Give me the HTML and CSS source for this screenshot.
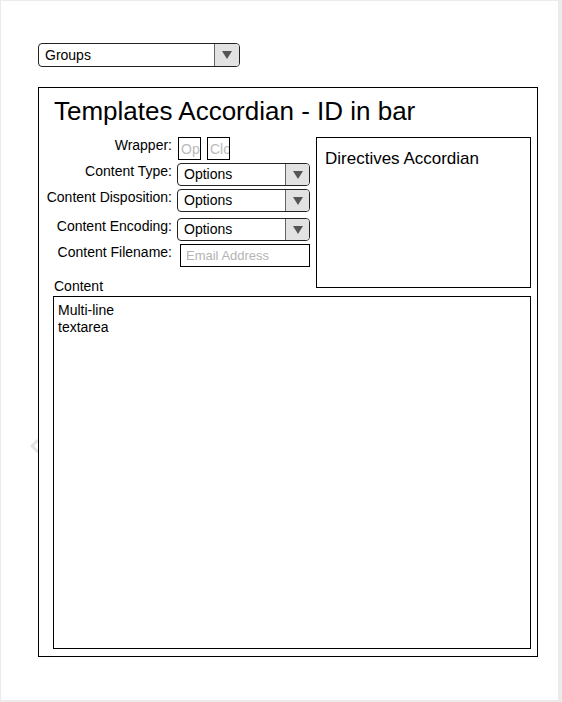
FILE: index.html
```html
<!DOCTYPE html>
<html lang="en">
<head>
  <meta charset="UTF-8">
  <meta name="viewport" content="width=device-width, initial-scale=1.0">
  <title>Templates Accordian</title>
  <link rel="stylesheet" href="styles.css">
</head>
<body>
  <div class="page">
    <svg class="pager" width="10" height="14" viewBox="0 0 10 14">
      <polyline points="8,1 2,7 8,13" fill="none" stroke="#e4e4e4" stroke-width="3"/>
    </svg>

    <div class="select groups">
      <span class="select-text">Groups</span>
      <span class="select-arrow"></span>
    </div>

    <div class="panel">
      <h1>Templates Accordian - ID in bar</h1>

      <div class="top">
        <div class="left">
          <div class="fields">
            <label>Wrapper:</label>
            <div class="wrapper-boxes">
              <span class="mini">Op</span>
              <span class="mini">Clo</span>
            </div>

            <label>Content Type:</label>
            <div class="select">
              <span class="select-text">Options</span>
              <span class="select-arrow"></span>
            </div>

            <label>Content Disposition:</label>
            <div class="select">
              <span class="select-text">Options</span>
              <span class="select-arrow"></span>
            </div>

            <label class="spaced">Content Encoding:</label>
            <div class="select spaced">
              <span class="select-text">Options</span>
              <span class="select-arrow"></span>
            </div>

            <label>Content Filename:</label>
            <div class="text-input">Email Address</div>
          </div>
          <div class="content-label">Content</div>
        </div>

        <div class="directives">Directives Accordian</div>
      </div>

      <div class="textarea">Multi-line<br>textarea</div>
    </div>
  </div>
</body>
</html>
```

FILE: styles.css
```css
body {
  margin: 0;
  background-color: #ebebeb;
  font-family: "Liberation Sans", Arial, sans-serif;
  color: #000;
}
.page {
  position: relative;
  margin: 1px 0 0 1px;
  width: 557px;
  height: 699px;
  box-sizing: border-box;
  padding: 42px 0 0 37px;
  background-color: #fff;
}
.pager {
  position: absolute;
  left: 29px;
  top: 438px;
}
.select {
  display: flex;
  height: 23px;
  box-sizing: border-box;
  border: 1px solid #222;
  border-radius: 4px;
  overflow: hidden;
  background-color: #fff;
}
.select-text {
  flex: 1;
  padding-left: 6px;
  font-size: 14px;
  line-height: 21px;
}
.select-arrow {
  width: 23px;
  border-left: 1px solid #666;
  background-color: #e2e2e2;
  display: flex;
  align-items: center;
  justify-content: center;
}
.select-arrow::after {
  content: "";
  border-left: 5px solid transparent;
  border-right: 5px solid transparent;
  border-top: 8px solid #555;
}
.groups {
  width: 202px;
  height: 24px;
}
.groups .select-text {
  line-height: 22px;
}
.groups .select-arrow {
  width: 24px;
}
.panel {
  position: relative;
  margin-top: 20px;
  width: 500px;
  height: 570px;
  box-sizing: border-box;
  border: 1px solid #000;
}
h1 {
  margin: 8px 0 0 15px;
  font-size: 26px;
  font-weight: normal;
  line-height: 30px;
}
.top {
  display: flex;
  margin-top: 11px;
}
.left {
  width: 271px;
}
.fields {
  display: grid;
  grid-template-columns: 133px 133px;
  column-gap: 5px;
  row-gap: 3px;
}
.fields label {
  text-align: right;
  font-size: 14px;
  line-height: 16px;
  white-space: nowrap;
}
.spaced {
  margin-top: 3px;
}
.wrapper-boxes {
  display: flex;
  gap: 6px;
  margin-left: 1px;
}
.mini {
  width: 23px;
  height: 23px;
  box-sizing: border-box;
  border: 1px solid #000;
  overflow: hidden;
  white-space: nowrap;
  padding-left: 2px;
  font-size: 14px;
  line-height: 22px;
  color: #bbb;
}
.text-input {
  margin-left: 3px;
  height: 23px;
  box-sizing: border-box;
  border: 1px solid #000;
  padding-left: 5px;
  font-size: 13px;
  line-height: 22px;
  color: #b4b4b4;
}
.content-label {
  margin: 11px 0 0 15px;
  font-size: 14px;
  line-height: 16px;
}
.directives {
  margin-left: 6px;
  width: 215px;
  height: 151px;
  box-sizing: border-box;
  border: 1px solid #000;
  padding: 11px 0 0 8px;
  font-size: 17px;
  line-height: 20px;
}
.textarea {
  margin: 2px 0 0 14px;
  width: 478px;
  height: 353px;
  box-sizing: border-box;
  border: 1px solid #000;
  padding: 5px 0 0 4px;
  font-size: 14px;
  line-height: 17px;
}
```
